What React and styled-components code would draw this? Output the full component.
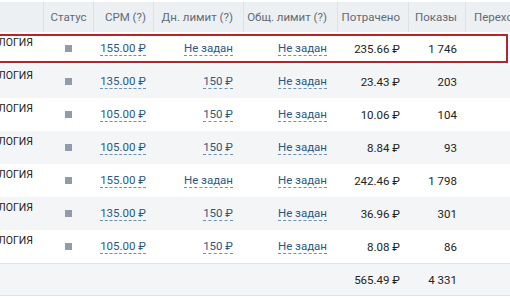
import React from 'react'
import styled, { createGlobalStyle } from 'styled-components'

const GlobalStyle = createGlobalStyle`
  html, body {
    margin: 0;
    padding: 0;
    background: #fff;
  }
  body {
    font-family: Roboto, "Liberation Sans", sans-serif;
    font-size: 11.5px;
    color: #222;
  }
`

// column widths, left to right
const columns = '43px 50px 60px 90px 94px 71px 57px 120px'

const rows = [
  { name: 'КАРДИОЛОГИЯ', cpm: '155.00 ₽', day: 'Не задан', total: 'Не задан', spent: '235.66 ₽', shows: '1 746' },
  { name: 'КАРДИОЛОГИЯ', cpm: '135.00 ₽', day: '150 ₽', total: 'Не задан', spent: '23.43 ₽', shows: '203' },
  { name: 'КАРДИОЛОГИЯ', cpm: '105.00 ₽', day: '150 ₽', total: 'Не задан', spent: '10.06 ₽', shows: '104' },
  { name: 'КАРДИОЛОГИЯ', cpm: '105.00 ₽', day: '150 ₽', total: 'Не задан', spent: '8.84 ₽', shows: '93' },
  { name: 'НЕВРОЛОГИЯ', cpm: '155.00 ₽', day: 'Не задан', total: 'Не задан', spent: '242.46 ₽', shows: '1 798' },
  { name: 'НЕВРОЛОГИЯ', cpm: '135.00 ₽', day: '150 ₽', total: 'Не задан', spent: '36.96 ₽', shows: '301' },
  { name: 'НЕВРОЛОГИЯ', cpm: '105.00 ₽', day: '150 ₽', total: 'Не задан', spent: '8.08 ₽', shows: '86' },
]

const Table = styled.div`
  width: 510px;
  overflow: hidden;
  padding-top: 2px;
`

const HeaderRow = styled.div`
  display: grid;
  grid-template-columns: ${columns};
  height: 30px;
  background: #edf0f3;
`

const HeadCell = styled.div`
  display: flex;
  align-items: center;
  justify-content: ${(p) => p.$align || 'flex-end'};
  padding: 0 ${(p) => p.$pr ?? 8}px 0 ${(p) => p.$pl ?? 0}px;
  border-left: ${(p) => (p.$first ? 'none' : '1px solid #dde1e6')};
  color: #626a75;
  white-space: nowrap;
`

const Row = styled.div`
  position: relative;
  display: grid;
  grid-template-columns: ${columns};
  height: 33px;
  background: ${(p) => (p.$striped ? '#f4f5f7' : '#fff')};

  ${(p) =>
    p.$selected &&
    `
    &::after {
      content: '';
      position: absolute;
      top: 2px;
      bottom: 2px;
      left: -4px;
      right: 2px;
      border: 2px solid #b3242b;
      pointer-events: none;
    }
  `}
`

const TotalRow = styled(Row)`
  height: 31px;
  background: #f4f5f7;
  border-top: 1px solid #dfe2e6;
  border-bottom: 1px solid #dfe2e6;
`

const Cell = styled.div`
  display: flex;
  align-items: center;
  justify-content: ${(p) => p.$align || 'flex-end'};
  padding: 0 ${(p) => p.$pr ?? 8}px 0 0;
  white-space: nowrap;
`

const NameCell = styled.div`
  display: flex;
  justify-content: flex-end;
  align-items: flex-start;
  overflow: hidden;
  padding: 4px 10px 0 0;
`

const Name = styled.div`
  font-size: 10.5px;
  line-height: 14px;
  color: #222;
  white-space: nowrap;
`

const StatusDot = styled.span`
  display: block;
  width: 7px;
  height: 7px;
  background: #929bab;
`

const Link = styled.span`
  color: #2a5885;
  line-height: 14px;
  border-bottom: 1px dashed #6f8fb3;
  cursor: pointer;
`

export default function App() {
  return (
    <>
      <GlobalStyle />
      <Table>
        <HeaderRow>
          <HeadCell $first />
          <HeadCell $align="center" $pr={0}>Статус</HeadCell>
          <HeadCell $pr={7}>CPM (?)</HeadCell>
          <HeadCell $pr={10}>Дн. лимит (?)</HeadCell>
          <HeadCell $pr={10}>Общ. лимит (?)</HeadCell>
          <HeadCell>Потрачено</HeadCell>
          <HeadCell>Показы</HeadCell>
          <HeadCell $align="flex-start" $pl={8}>Переходы</HeadCell>
        </HeaderRow>

        {rows.map((r, i) => (
          <Row key={i} $striped={i % 2 === 1} $selected={i === 0}>
            <NameCell>
              <Name>
                {r.name}
                <br />
                CPM
              </Name>
            </NameCell>
            <Cell $align="center" $pr={0}>
              <StatusDot />
            </Cell>
            <Cell $pr={7}>
              <Link>{r.cpm}</Link>
            </Cell>
            <Cell $pr={10}>
              <Link>{r.day}</Link>
            </Cell>
            <Cell $pr={10}>
              <Link>{r.total}</Link>
            </Cell>
            <Cell>{r.spent}</Cell>
            <Cell>{r.shows}</Cell>
            <Cell />
          </Row>
        ))}

        <TotalRow>
          <Cell />
          <Cell />
          <Cell />
          <Cell />
          <Cell />
          <Cell>565.49 ₽</Cell>
          <Cell>4 331</Cell>
          <Cell />
        </TotalRow>
      </Table>
    </>
  )
}
